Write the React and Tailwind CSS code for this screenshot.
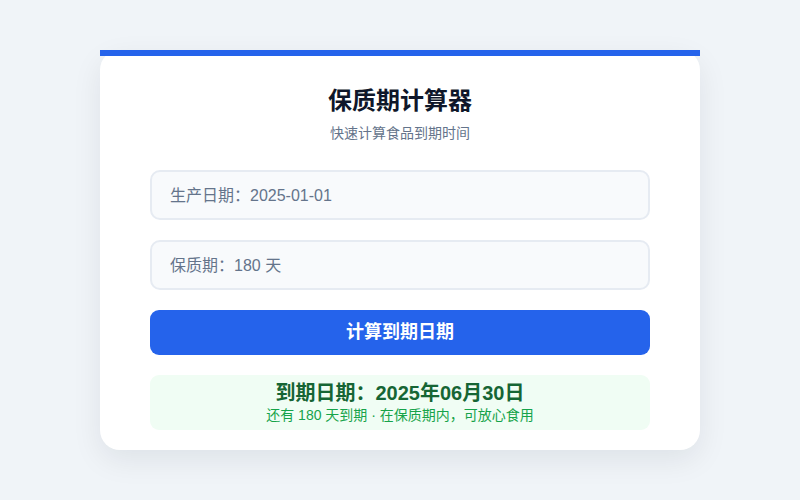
export default function App() {
  const font = { fontFamily: '"Liberation Sans", "Noto Sans CJK SC", sans-serif' };
  return (
    <div className="w-[800px] h-[500px] bg-[#f0f4f8] flex justify-center pt-[50px]" style={font}>
      <div className="relative w-[600px] h-[400px] bg-white rounded-[20px] shadow-[0_10px_30px_rgba(15,23,42,0.08)] pt-[33px] px-[50px] flex flex-col">
        <div className="absolute top-0 left-0 right-0 h-[6px] bg-[#2563eb]" />
        <h1 className="text-center text-[24px] leading-[36px] font-bold text-[#0f172a]">保质期计算器</h1>
        <p className="text-center text-[14px] leading-[20px] text-[#64748b] mt-[4px]">快速计算食品到期时间</p>
        <div className="mt-[27px] h-[50px] rounded-[10px] border-2 border-[#e6ebf2] bg-[#f8fafc] flex items-center pl-[18px] pt-[2px] text-[16px] text-[#64748b]">
          生产日期：2025-01-01
        </div>
        <div className="mt-[20px] h-[50px] rounded-[10px] border-2 border-[#e6ebf2] bg-[#f8fafc] flex items-center pl-[18px] pt-[2px] text-[16px] text-[#64748b]">
          保质期：180 天
        </div>
        <button className="mt-[20px] h-[45px] rounded-[9px] bg-[#2563eb] text-white text-[18px] font-bold flex items-center justify-center">
          计算到期日期
        </button>
        <div className="mt-[20px] h-[55px] rounded-[9px] bg-[#f0fdf4] flex flex-col items-center pt-[6px]">
          <div className="text-[20px] leading-[24px] font-bold text-[#166534]">到期日期：2025年06月30日</div>
          <div className="text-[14px] leading-[20px] text-[#16a34a]">还有 180 天到期 · 在保质期内，可放心食用</div>
        </div>
      </div>
    </div>
  );
}
